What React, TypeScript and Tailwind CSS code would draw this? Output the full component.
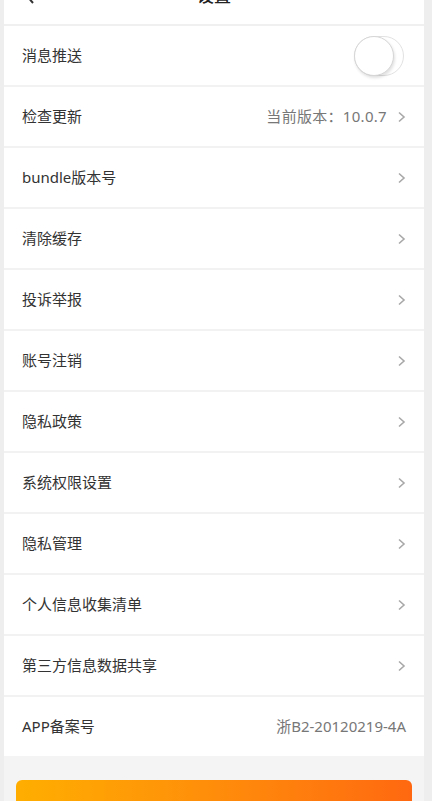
import { Fragment } from 'react';

type Row = { label: string; value?: string; arrow?: boolean; toggle?: boolean };

const rows: Row[] = [
  { label: '消息推送', toggle: true },
  { label: '检查更新', value: '当前版本：10.0.7', arrow: true },
  { label: 'bundle版本号', arrow: true },
  { label: '清除缓存', arrow: true },
  { label: '投诉举报', arrow: true },
  { label: '账号注销', arrow: true },
  { label: '隐私政策', arrow: true },
  { label: '系统权限设置', arrow: true },
  { label: '隐私管理', arrow: true },
  { label: '个人信息收集清单', arrow: true },
  { label: '第三方信息数据共享', arrow: true },
  { label: 'APP备案号', value: '浙B2-20120219-4A' },
];

function Chevron() {
  return (
    <svg width="9" height="12" viewBox="0 0 9 12" className="ml-[10px]">
      <path d="M2 1.5 L7 6 L2 10.5" fill="none" stroke="#a8a8a8" strokeWidth="1.6" />
    </svg>
  );
}

function Toggle() {
  return (
    <div className="relative mr-[2px] h-[40px] w-[50px] rounded-full border border-[#e2e2e2] bg-white">
      <div className="absolute -left-px -top-px h-[40px] w-[40px] rounded-full border border-[#d6d6d6] bg-white shadow-[1px_2px_3px_rgba(0,0,0,0.12)]" />
    </div>
  );
}

export default function App() {
  return (
    <div
      className="min-h-[801px] bg-[#eeeeee] pl-[4px] pr-[8px]"
      style={{ fontFamily: '"Noto Sans", "Noto Sans CJK SC", sans-serif' }}
    >
      <div className="bg-[#f4f4f4] pb-[40px]">
        <div className="h-[24px] overflow-hidden bg-white">
          <div className="relative -mt-[24px] flex h-[40px] items-center justify-center">
            <svg width="10" height="16" viewBox="0 0 10 16" className="absolute left-[21px]">
              <path d="M8 1 L2 8 L8 15" fill="none" stroke="#333" strokeWidth="2" />
            </svg>
            <span className="text-[17px] font-medium text-[#222]">设置</span>
          </div>
        </div>
        <div className="h-[2px] bg-[#f0f0f0]" />
        {rows.map((r, i) => (
          <Fragment key={r.label}>
            {i > 0 && <div className="h-[2px] bg-[#f2f2f2]" />}
            <div className="flex h-[59px] items-center bg-white pl-[18px] pr-[18px]">
              <span className="flex-1 text-[15px] text-[#333]">{r.label}</span>
              {r.value && (
                <span className={r.arrow ? 'text-[15px] tracking-[0.3px] text-[#777]' : 'text-[15px] text-[#777]'}>
                  {r.value}
                </span>
              )}
              {r.arrow && <Chevron />}
              {r.toggle && <Toggle />}
            </div>
          </Fragment>
        ))}
        <div className="px-[12px] pt-[24px]">
          <div className="h-[46px] rounded-[6px] bg-gradient-to-r from-[#ffae00] to-[#ff6810]" />
        </div>
      </div>
    </div>
  );
}
